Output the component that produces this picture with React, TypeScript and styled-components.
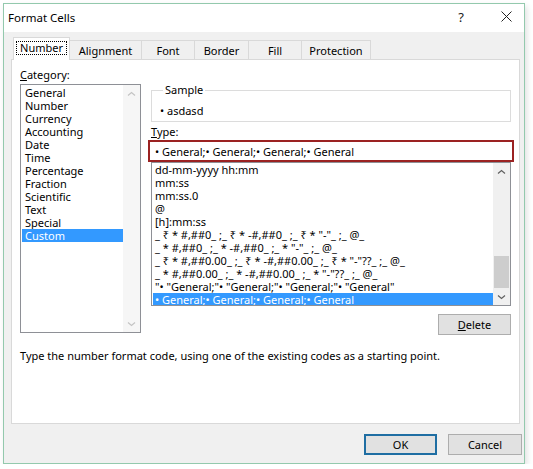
import React from "react";
import styled, { createGlobalStyle } from "styled-components";

const GlobalStyle = createGlobalStyle`
  html, body {
    margin: 0;
    padding: 0;
    background: #ffffff;
  }
  body {
    font-family: "Segoe UI", "Noto Sans", "Open Sans", sans-serif;
    font-size: 11px;
    color: #000;
  }
`;

const Page = styled.div`
  padding: 3px 0 0 3px;
`;

const Window = styled.div`
  width: 522px;
  box-sizing: border-box;
  border: 1px solid #93c9ad;
  background: #f0f0f0;
  display: flex;
  flex-direction: column;
  box-shadow: 2px 3px 6px rgba(0, 0, 0, 0.12);
`;

const TitleBar = styled.div`
  height: 28px;
  background: #ffffff;
  display: flex;
  align-items: center;
  padding: 0 0 0 4px;
`;

const Title = styled.div`
  flex: 1;
  font-size: 11.5px;
  margin-top: -2px;
`;

const TitleButton = styled.div`
  width: 36px;
  height: 28px;
  margin-left: 9px;
  display: flex;
  align-items: center;
  justify-content: center;
  font-size: 13px;
  color: #222;
  padding-bottom: 3px;
  box-sizing: border-box;
`;

const Body = styled.div`
  padding: 7px 2px 8px 7px;
  display: flex;
  flex-direction: column;
`;

const TabRow = styled.div`
  display: flex;
  align-items: flex-end;
  height: 21px;
  margin-left: 2px;
  position: relative;
  z-index: 1;
  margin-bottom: -1px;
`;

const Tab = styled.div<{ $w: number; $active?: boolean }>`
  width: ${(p) => p.$w}px;
  height: ${(p) => (p.$active ? 23 : 20)}px;
  box-sizing: border-box;
  margin-left: -1px;
  border: 1px solid #d9d9d9;
  border-bottom: ${(p) => (p.$active ? "none" : "1px solid #d9d9d9")};
  background: ${(p) => (p.$active ? "#ffffff" : "#f0f0f0")};
  display: flex;
  align-items: center;
  justify-content: center;
  padding-bottom: ${(p) => (p.$active ? 2 : 0)}px;
  &:first-child {
    margin-left: 0;
  }
`;

const FocusLabel = styled.span`
  outline: 1px dotted #000;
  outline-offset: 0;
  padding: 0 3px;
  line-height: 12px;
`;

const Panel = styled.div`
  width: 509px;
  height: 365px;
  box-sizing: border-box;
  background: #ffffff;
  border: 1px solid #d9d9d9;
  padding: 8px 8px 0 8px;
  display: flex;
  flex-direction: column;
`;

const Columns = styled.div`
  display: grid;
  grid-template-columns: 121px 360px;
  column-gap: 10px;
`;

const Column = styled.div`
  display: flex;
  flex-direction: column;
`;

const Label = styled.div<{ $gap?: number }>`
  line-height: 14px;
  height: 14px;
  margin-top: ${(p) => p.$gap ?? 0}px;
`;

const ListBox = styled.div<{ $h: number; $top?: number }>`
  height: ${(p) => p.$h}px;
  margin-top: ${(p) => p.$top ?? 0}px;
  box-sizing: border-box;
  border: 1px solid #8e9096;
  background: #fff;
  display: flex;
  overflow: hidden;
`;

const Items = styled.div<{ $pad: number }>`
  flex: 1;
  display: flex;
  flex-direction: column;
  padding-top: ${(p) => p.$pad}px;
  min-width: 0;
  overflow: hidden;
`;

const Item = styled.div<{ $selected?: boolean; $indent: number }>`
  height: 13px;
  line-height: 13px;
  flex-shrink: 0;
  white-space: nowrap;
  padding-left: ${(p) => p.$indent}px;
  margin-left: 1px;
  background: ${(p) => (p.$selected ? "#3399ff" : "transparent")};
  color: ${(p) => (p.$selected ? "#ffffff" : "#000")};
`;

const ScrollBar = styled.div<{ $disabled?: boolean }>`
  width: 17px;
  flex-shrink: 0;
  display: flex;
  flex-direction: column;
  background: ${(p) => (p.$disabled ? "#f6f6f6" : "#f0f0f0")};
  color: ${(p) => (p.$disabled ? "#c4c4c4" : "#606060")};
`;

const ArrowBtn = styled.div`
  height: 17px;
  display: flex;
  align-items: center;
  justify-content: center;
`;

const Track = styled.div`
  flex: 1;
  display: flex;
  flex-direction: column;
  justify-content: flex-end;
  padding: 0 1px;
`;

const Thumb = styled.div<{ $h: number }>`
  height: ${(p) => p.$h}px;
  background: #cdcdcd;
`;

const Group = styled.fieldset`
  margin: 15px 0 0 0;
  padding: 7px 0 3px 8px;
  border: 1px solid #dcdcdc;
  min-width: 0;
  line-height: 14px;
`;

const Legend = styled.legend`
  padding: 0 2px;
  margin-left: 3px;
  line-height: 14px;
`;

const TypeInput = styled.div`
  margin: 1px 0 0 -3px;
  width: 366px;
  height: 22px;
  box-sizing: border-box;
  border: 2px solid #9b2222;
  padding-left: 5px;
  display: flex;
  align-items: center;
  background: #fff;
`;

const ButtonRow = styled.div`
  display: flex;
  justify-content: flex-end;
  margin-top: 8px;
`;

const Button = styled.div<{ $default?: boolean; $w: number }>`
  width: ${(p) => p.$w}px;
  height: 21px;
  box-sizing: border-box;
  background: #e1e1e1;
  border: ${(p) => (p.$default ? "2px solid #1f6ea3" : "1px solid #adadad")};
  display: flex;
  align-items: center;
  justify-content: center;
`;

const Hint = styled.div`
  margin-top: 14px;
  line-height: 14px;
`;

const Footer = styled.div`
  display: flex;
  justify-content: flex-end;
  gap: 11px;
  margin-top: 10px;
`;

const Chevron = ({ down }: { down?: boolean }) => (
  <svg width="9" height="6" viewBox="0 0 9 6">
    <polyline
      points={down ? "1,1.5 4.5,4.5 8,1.5" : "1,4.5 4.5,1.5 8,4.5"}
      fill="none"
      stroke="currentColor"
      strokeWidth="1.2"
    />
  </svg>
);

const categories = [
  "General",
  "Number",
  "Currency",
  "Accounting",
  "Date",
  "Time",
  "Percentage",
  "Fraction",
  "Scientific",
  "Text",
  "Special",
  "Custom",
];

const types = [
  "dd-mm-yyyy hh:mm",
  "mm:ss",
  "mm:ss.0",
  "@",
  "[h]:mm:ss",
  '_ ₹ * #,##0_ ;_ ₹ * -#,##0_ ;_ ₹ * "-"_ ;_ @_',
  '_ * #,##0_ ;_ * -#,##0_ ;_ * "-"_ ;_ @_',
  '_ ₹ * #,##0.00_ ;_ ₹ * -#,##0.00_ ;_ ₹ * "-"??_ ;_ @_',
  '_ * #,##0.00_ ;_ * -#,##0.00_ ;_ * "-"??_ ;_ @_',
  '"• "General;"• "General;"• "General;"• "General"',
  "• General;• General;• General;• General",
];

const tabs = [
  { name: "Number", w: 57 },
  { name: "Alignment", w: 73 },
  { name: "Font", w: 54 },
  { name: "Border", w: 55 },
  { name: "Fill", w: 54 },
  { name: "Protection", w: 70 },
];

export default function App() {
  return (
    <>
      <GlobalStyle />
      <Page>
        <Window>
          <TitleBar>
            <Title>Format Cells</Title>
            <TitleButton>?</TitleButton>
            <TitleButton>
              <svg width="11" height="11" viewBox="0 0 11 11">
                <path d="M0.5 0.5 L10.5 10.5 M10.5 0.5 L0.5 10.5" stroke="#222" strokeWidth="1" />
              </svg>
            </TitleButton>
          </TitleBar>
          <Body>
            <TabRow>
              {tabs.map((t, i) => (
                <Tab key={t.name} $w={t.w} $active={i === 0}>
                  {i === 0 ? <FocusLabel>{t.name}</FocusLabel> : t.name}
                </Tab>
              ))}
            </TabRow>
            <Panel>
              <Columns>
                <Column>
                  <Label>
                    <u>C</u>ategory:
                  </Label>
                  <ListBox $h={249} $top={2}>
                    <Items $pad={1}>
                      {categories.map((c) => (
                        <Item key={c} $indent={3} $selected={c === "Custom"}>
                          {c}
                        </Item>
                      ))}
                    </Items>
                    <ScrollBar $disabled>
                      <ArrowBtn>
                        <Chevron />
                      </ArrowBtn>
                      <Track />
                      <ArrowBtn>
                        <Chevron down />
                      </ArrowBtn>
                    </ScrollBar>
                  </ListBox>
                </Column>
                <Column>
                  <Group>
                    <Legend>Sample</Legend>
                    <div>• asdasd</div>
                  </Group>
                  <Label $gap={3}>
                    <u>T</u>ype:
                  </Label>
                  <TypeInput>• General;• General;• General;• General</TypeInput>
                  <ListBox $h={144}>
                    <Items $pad={0}>
                      {types.map((t, i) => (
                        <Item key={t} $indent={2} $selected={i === types.length - 1}>
                          {t}
                        </Item>
                      ))}
                    </Items>
                    <ScrollBar>
                      <ArrowBtn>
                        <Chevron />
                      </ArrowBtn>
                      <Track>
                        <Thumb $h={32} />
                      </Track>
                      <ArrowBtn>
                        <Chevron down />
                      </ArrowBtn>
                    </ScrollBar>
                  </ListBox>
                  <ButtonRow>
                    <Button $w={73}>
                      <u>D</u>elete
                    </Button>
                  </ButtonRow>
                </Column>
              </Columns>
              <Hint>Type the number format code, using one of the existing codes as a starting point.</Hint>
            </Panel>
            <Footer>
              <Button $w={73} $default>
                OK
              </Button>
              <Button $w={74}>Cancel</Button>
            </Footer>
          </Body>
        </Window>
      </Page>
    </>
  );
}
